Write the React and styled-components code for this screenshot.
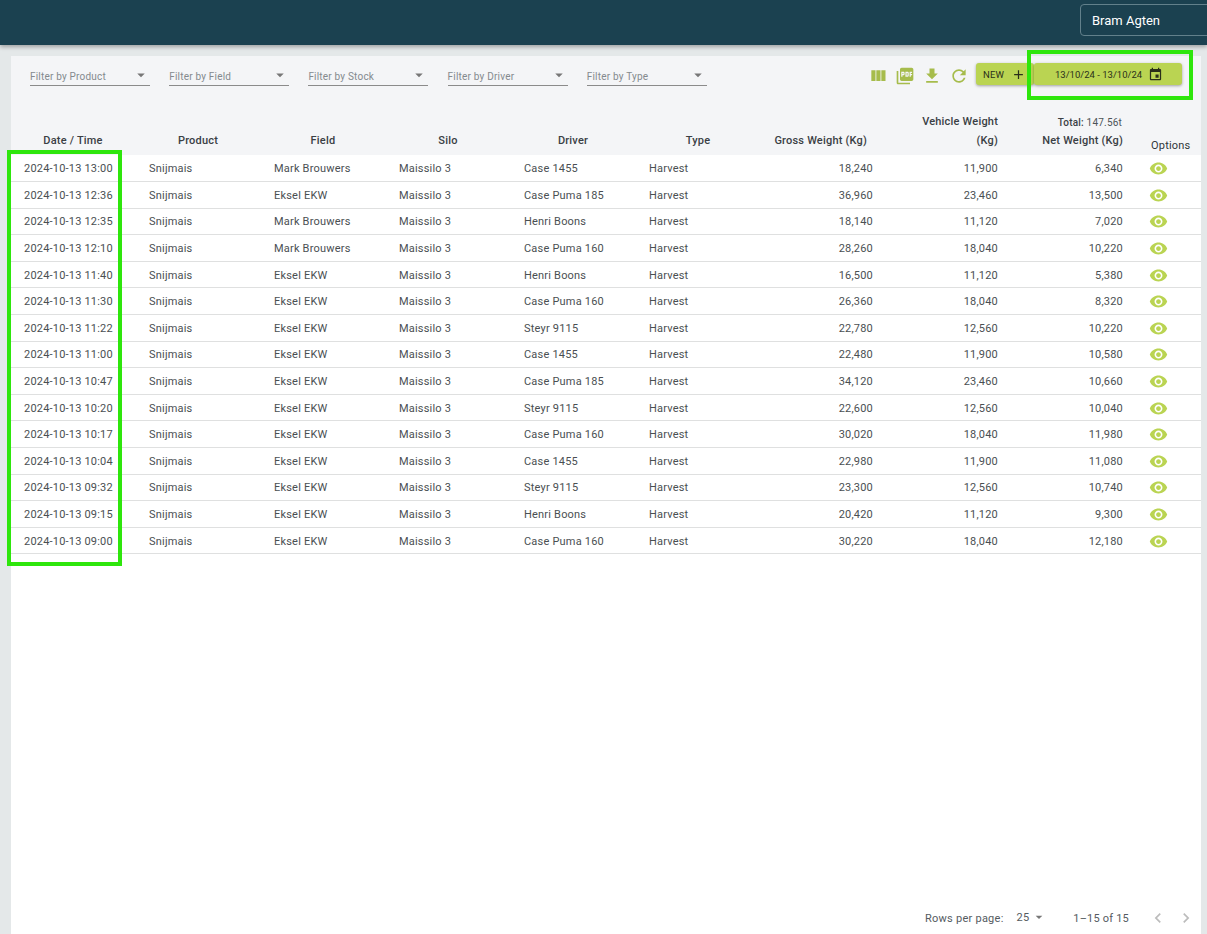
import styled, { createGlobalStyle } from 'styled-components';

const GREEN = '#bad452';

const rows = [
  ['2024-10-13 13:00', 'Mark Brouwers', 'Case 1455', '18,240', '11,900', '6,340'],
  ['2024-10-13 12:36', 'Eksel EKW', 'Case Puma 185', '36,960', '23,460', '13,500'],
  ['2024-10-13 12:35', 'Mark Brouwers', 'Henri Boons', '18,140', '11,120', '7,020'],
  ['2024-10-13 12:10', 'Mark Brouwers', 'Case Puma 160', '28,260', '18,040', '10,220'],
  ['2024-10-13 11:40', 'Eksel EKW', 'Henri Boons', '16,500', '11,120', '5,380'],
  ['2024-10-13 11:30', 'Eksel EKW', 'Case Puma 160', '26,360', '18,040', '8,320'],
  ['2024-10-13 11:22', 'Eksel EKW', 'Steyr 9115', '22,780', '12,560', '10,220'],
  ['2024-10-13 11:00', 'Eksel EKW', 'Case 1455', '22,480', '11,900', '10,580'],
  ['2024-10-13 10:47', 'Eksel EKW', 'Case Puma 185', '34,120', '23,460', '10,660'],
  ['2024-10-13 10:20', 'Eksel EKW', 'Steyr 9115', '22,600', '12,560', '10,040'],
  ['2024-10-13 10:17', 'Eksel EKW', 'Case Puma 160', '30,020', '18,040', '11,980'],
  ['2024-10-13 10:04', 'Eksel EKW', 'Case 1455', '22,980', '11,900', '11,080'],
  ['2024-10-13 09:32', 'Eksel EKW', 'Steyr 9115', '23,300', '12,560', '10,740'],
  ['2024-10-13 09:15', 'Eksel EKW', 'Henri Boons', '20,420', '11,120', '9,300'],
  ['2024-10-13 09:00', 'Eksel EKW', 'Case Puma 160', '30,220', '18,040', '12,180'],
];

const filters = ['Filter by Product', 'Filter by Field', 'Filter by Stock', 'Filter by Driver', 'Filter by Type'];

const paths = {
  columns: 'M10 18h5V5h-5v13zm-6 0h5V5H4v13zM16 5v13h5V5h-5z',
  pdf: 'M20 2H8c-1.1 0-2 .9-2 2v12c0 1.1.9 2 2 2h12c1.1 0 2-.9 2-2V4c0-1.1-.9-2-2-2zm-8.5 7.5c0 .83-.67 1.5-1.5 1.5H9v2H7.5V7H10c.83 0 1.5.67 1.5 1.5v1zm5 2c0 .83-.67 1.5-1.5 1.5h-2.5V7H15c.83 0 1.5.67 1.5 1.5v3zm4-3H19v1h1.5V11H19v2h-1.5V7h3v1.5zM9 9.5h1v-1H9v1zM4 6H2v14c0 1.1.9 2 2 2h14v-2H4V6zm10 5.5h1v-3h-1v3z',
  download: 'M19 9h-4V3H9v6H5l7 7 7-7zM5 18v2h14v-2H5z',
  refresh: 'M17.65 6.35C16.2 4.9 14.21 4 12 4c-4.42 0-7.99 3.58-7.99 8s3.57 8 7.99 8c3.73 0 6.84-2.55 7.73-6h-2.08c-.82 2.33-3.04 4-5.65 4-3.31 0-6-2.69-6-6s2.69-6 6-6c1.66 0 3.14.69 4.22 1.78L13 11h7V4l-2.35 2.35z',
  eye: 'M12 4.5C7 4.5 2.73 7.61 1 12c1.73 4.39 6 7.5 11 7.5s9.27-3.11 11-7.5c-1.73-4.39-6-7.5-11-7.5zM12 17c-2.76 0-5-2.24-5-5s2.24-5 5-5 5 2.24 5 5-2.24 5-5 5zm0-8c-1.66 0-3 1.34-3 3s1.34 3 3 3 3-1.34 3-3-1.34-3-3-3z',
  event: 'M17 12h-5v5h5v-5zM16 1v2H8V1H6v2H5c-1.11 0-1.99.9-1.99 2L3 19c0 1.1.89 2 2 2h14c1.1 0 2-.9 2-2V5c0-1.1-.9-2-2-2h-1V1h-2zm3 18H5V8h14v11z',
  add: 'M19 13h-6v6h-2v-6H5v-2h6V5h2v6h6v2z',
  left: 'M15.41 7.41 14 6l-6 6 6 6 1.41-1.41L10.83 12z',
  right: 'M10 6 8.59 7.41 13.17 12l-4.58 4.59L10 18l6-6z',
  drop: 'M7 10l5 5 5-5z',
};

const Icon = ({ name, size = 24, color = 'currentColor' }) => (
  <svg width={size} height={size} viewBox="0 0 24 24" fill={color} style={{ display: 'block', flexShrink: 0 }}>
    <path d={paths[name]} />
  </svg>
);

const GlobalStyle = createGlobalStyle`
  html, body {
    margin: 0;
    padding: 0;
    height: 100%;
    overflow: hidden;
    background: #e4e8e9;
    font-family: Roboto, "Liberation Sans", sans-serif;
  }
`;

const Page = styled.div`
  position: relative;
  height: 934px;
  display: flex;
  flex-direction: column;
`;

const TopBar = styled.header`
  height: 45px;
  flex-shrink: 0;
  background: #1b4150;
  box-shadow: 0 2px 4px rgba(0, 0, 0, 0.3);
  display: flex;
  justify-content: flex-end;
  align-items: flex-start;
  padding-top: 4px;
  box-sizing: border-box;
  overflow: hidden;
`;

const UserBox = styled.div`
  width: 128px;
  height: 32px;
  margin-right: -1px;
  box-sizing: border-box;
  border: 1px solid #62808b;
  border-radius: 4px 0 0 4px;
  color: #fff;
  font-size: 13px;
  line-height: 31px;
  padding-left: 11px;
`;

const Panel = styled.main`
  flex: 1;
  margin: 11px 6px 0 11px;
  background: #fff;
  display: flex;
  flex-direction: column;
  min-height: 0;
`;

const TopArea = styled.div`
  background: #f4f5f7;
  height: 99px;
  display: flex;
  flex-direction: column;
`;

const Toolbar = styled.div`
  height: 49px;
  padding: 7px 19px 0 19px;
  box-sizing: border-box;
  display: flex;
  align-items: flex-start;
  justify-content: space-between;
`;

const Filters = styled.div`
  display: flex;
  gap: 19.2px;
`;

const FilterSelect = styled.div`
  position: relative;
  width: 120px;
  height: 23px;
  box-sizing: border-box;
  border-bottom: 1px solid #8b8b8b;
  color: #848a8e;
  font-size: 10px;
  letter-spacing: 0.2px;
  line-height: 28px;
  svg {
    position: absolute;
    right: 0;
    top: 3px;
  }
`;

const Actions = styled.div`
  display: flex;
  align-items: flex-start;
`;

const ToolIcon = styled.span`
  width: 20px;
  height: 20px;
  margin: 3px 7px 0 0;
  display: block;
`;

const GreenButton = styled.div`
  height: 22px;
  display: flex;
  align-items: center;
  background: ${GREEN};
  border-radius: 3px;
  box-shadow: 0 1px 3px rgba(0, 0, 0, 0.35);
  color: #2a2f1a;
  font-size: 9.5px;
  box-sizing: border-box;
`;

const NewButton = styled(GreenButton)`
  width: 58px;
  padding-left: 7px;
  gap: 7px;
  letter-spacing: 0.1px;
`;

const DateButton = styled(GreenButton)`
  width: 148px;
  padding-left: 21px;
  gap: 6px;
`;

const TableHead = styled.thead`
  background: #f4f5f7;
`;

const StyledTable = styled.table`
  width: 100%;
  border-collapse: collapse;
  table-layout: fixed;
`;

const Th = styled.th`
  height: 45px;
  padding: 0;
  vertical-align: bottom;
  font-size: 11px;
  font-weight: 500;
  letter-spacing: 0.2px;
  color: #3a4044;
  line-height: 19px;
  text-align: ${(p) => p.$align || 'center'};
  padding-bottom: 5px;
  padding-right: ${(p) => p.$pr || 0}px;
  padding-left: ${(p) => p.$pl || 0}px;
`;

const TotalLine = styled.div`
  font-size: 10px;
  line-height: 16px;
  padding-right: 1px;
  span {
    font-weight: 400;
    color: #4d5458;
  }
`;

const OptionsLabel = styled.div`
  position: relative;
  top: 5px;
  font-weight: 400;
  color: #30363a;
`;

const Tr = styled.tr`
  height: 26.6px;
  border-bottom: 1px solid #dfe0e0;
  background: #fff;
`;

const Td = styled.td`
  padding: 0.8px 0 0;
  font-size: 11px;
  letter-spacing: 0.2px;
  color: #4a4f52;
  white-space: nowrap;
  text-align: ${(p) => p.$align || 'left'};
  padding-left: ${(p) => p.$pl || 0}px;
`;

const TableArea = styled.div`
  flex: 1;
  margin-top: -50px;
  min-height: 0;
`;

const Footer = styled.footer`
  height: 32px;
  flex-shrink: 0;
  display: flex;
  justify-content: flex-end;
  align-items: center;
  font-size: 11px;
  letter-spacing: 0.2px;
  color: #555b5f;
  padding-right: 5px;
`;

const RowsLabel = styled.span`
  margin-right: 13px;
  letter-spacing: 0.25px;
`;

const RowsSelect = styled.span`
  display: flex;
  align-items: center;
  gap: 2px;
  margin-right: 26px;
  position: relative;
  top: -1px;
`;

const PageRange = styled.span`
  margin-right: 19px;
`;

const PageGap = styled.span`
  width: 8px;
`;

const Highlight = styled.div`
  position: absolute;
  box-sizing: border-box;
  border: 4px solid #2ee60c;
  left: ${(p) => p.$x}px;
  top: ${(p) => p.$y}px;
  width: ${(p) => p.$w}px;
  height: ${(p) => p.$h}px;
`;

export default function App() {
  return (
    <Page>
      <GlobalStyle />
      <TopBar>
        <UserBox>Bram Agten</UserBox>
      </TopBar>
      <Panel>
        <TopArea>
          <Toolbar>
            <Filters>
              {filters.map((f) => (
                <FilterSelect key={f}>
                  {f}
                  <Icon name="drop" size={18} color="#777" />
                </FilterSelect>
              ))}
            </Filters>
            <Actions>
              <ToolIcon><Icon name="columns" size={20} color="#a6bc4c" /></ToolIcon>
              <ToolIcon><Icon name="pdf" size={20} color="#a6bc4c" /></ToolIcon>
              <ToolIcon><Icon name="download" size={20} color="#a6bc4c" /></ToolIcon>
              <ToolIcon><Icon name="refresh" size={20} color="#a6bc4c" /></ToolIcon>
              <NewButton>NEW <Icon name="add" size={15} color="#2a2f1a" /></NewButton>
              <DateButton>13/10/24 - 13/10/24 <Icon name="event" size={15} color="#2a2f1a" /></DateButton>
            </Actions>
          </Toolbar>
        </TopArea>
        <TableArea>
          <StyledTable>
            <colgroup>
              <col style={{ width: 130 }} />
              <col style={{ width: 125 }} />
              <col style={{ width: 125 }} />
              <col style={{ width: 125 }} />
              <col style={{ width: 125 }} />
              <col style={{ width: 125 }} />
              <col style={{ width: 107 }} />
              <col style={{ width: 125 }} />
              <col style={{ width: 125 }} />
              <col />
            </colgroup>
            <TableHead>
              <tr>
                <Th $pr={6}>Date / Time</Th>
                <Th $pr={11}>Product</Th>
                <Th $pr={11}>Field</Th>
                <Th $pr={11}>Silo</Th>
                <Th $pr={11}>Driver</Th>
                <Th $pr={11}>Type</Th>
                <Th $align="right" $pr={6}>Gross Weight (Kg)</Th>
                <Th $align="right">Vehicle Weight<br />(Kg)</Th>
                <Th $align="right">
                  <TotalLine>Total: <span>147.56t</span></TotalLine>
                  Net Weight (Kg)
                </Th>
                <Th $align="left" $pl={28}><OptionsLabel>Options</OptionsLabel></Th>
              </tr>
            </TableHead>
            <tbody>
              {rows.map((r) => (
                <Tr key={r[0]}>
                  <Td $pl={13}>{r[0]}</Td>
                  <Td $pl={8}>Snijmais</Td>
                  <Td $pl={8}>{r[1]}</Td>
                  <Td $pl={8}>Maissilo 3</Td>
                  <Td $pl={8}>{r[2]}</Td>
                  <Td $pl={8}>Harvest</Td>
                  <Td $align="right">{r[3]}</Td>
                  <Td $align="right">{r[4]}</Td>
                  <Td $align="right">{r[5]}</Td>
                  <Td $pl={26}><Icon name="eye" size={19} color={GREEN} /></Td>
                </Tr>
              ))}
            </tbody>
          </StyledTable>
        </TableArea>
        <Footer>
          <RowsLabel>Rows per page:</RowsLabel>
          <RowsSelect>25 <Icon name="drop" size={16} color="#777" /></RowsSelect>
          <PageRange>1–15 of 15</PageRange>
          <Icon name="left" size={20} color="#bcbcbc" />
          <PageGap />
          <Icon name="right" size={20} color="#bcbcbc" />
        </Footer>
      </Panel>
      <Highlight $x={7} $y={150} $w={115} $h={416} />
      <Highlight $x={1027} $y={50} $w={166} $h={50} />
    </Page>
  );
}
